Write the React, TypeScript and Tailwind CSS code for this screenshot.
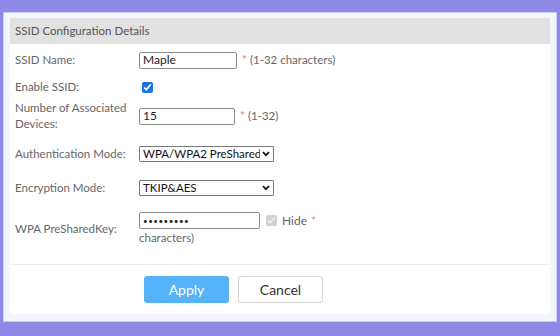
import React from 'react';

const font = { fontFamily: 'Lato, "Noto Sans", sans-serif' };

const Star = () => <span className="text-[#f07a7a] mr-[3px]">*</span>;

const Chevron = () => (
  <svg className="absolute right-[4px] top-[5px] pointer-events-none" width="8" height="6" viewBox="0 0 8 6">
    <path d="M1 1.2l3 3 3-3" fill="none" stroke="#111" strokeWidth="1.7" />
  </svg>
);

const Select: React.FC<{ value: string }> = ({ value }) => (
  <div className="relative w-[135px] h-[16px]">
    <select
      defaultValue={value}
      className="appearance-none block w-full h-[16px] border border-[#7a7a7a] rounded-[1px] bg-white pl-[3px] pr-[13px] py-0 text-[11.5px] leading-[14px] text-[#111]"
    >
      <option>{value}</option>
    </select>
    <Chevron />
  </div>
);

const TextInput: React.FC<{ value: string; width: string; type?: string; size?: string }> = ({
  value,
  width,
  type = 'text',
  size = 'text-[12px]',
}) => (
  <input
    type={type}
    defaultValue={value}
    className={`${width} ${size} h-[17px] border border-[#8a8a8a] rounded-[2px] bg-white px-[3px] text-[#222] outline-none`}
  />
);

const Label: React.FC<{ children: React.ReactNode }> = ({ children }) => (
  <div className="w-[129px] pl-[5px] pr-[6px] shrink-0 text-[11.5px] leading-[16px] text-[#666]">{children}</div>
);

export default function App() {
  return (
    <div className="w-[560px] h-[336px] bg-[#8e88e6] pt-[12px] px-[3px] overflow-hidden" style={font}>
      <div className="h-[310px] bg-[#f3f7fc] border border-[#cfcbf4] px-[6px] pt-[5px]">
        <div className="bg-white h-[296px] flex flex-col">
          <div className="h-[26px] bg-[#e1e1e1] flex items-center pl-[5px] text-[11.5px] text-[#555]">
            SSID Configuration Details
          </div>

          <div className="flex items-center h-[30px] pt-[2px]">
            <Label>SSID Name:</Label>
            <TextInput value="Maple" width="w-[98px]" />
            <span className="ml-[5px] text-[11.5px] text-[#666]"><Star />(1-32 characters)</span>
          </div>

          <div className="flex items-center h-[26px]">
            <Label>Enable SSID:</Label>
            <input type="checkbox" defaultChecked className="ml-[3px] w-[11px] h-[11px] accent-[#1a73e8]" />
          </div>

          <div className="flex items-center h-[32px]">
            <Label>Number of Associated Devices:</Label>
            <TextInput value="15" width="w-[96px]" />
            <span className="ml-[5px] text-[11.5px] text-[#666]"><Star />(1-32)</span>
          </div>

          <div className="flex items-center h-[44px]">
            <Label>Authentication Mode:</Label>
            <Select value="WPA/WPA2 PreSharedKey" />
          </div>

          <div className="flex items-center h-[24px]">
            <Label>Encryption Mode:</Label>
            <Select value="TKIP&AES" />
          </div>

          <div className="flex items-center pt-[12px] h-[46px]">
            <Label>WPA PreSharedKey:</Label>
            <div className="flex flex-col text-[11.5px] text-[#666]">
              <div className="flex items-center h-[17px]">
                <TextInput value="123456789" type="password" width="w-[121px]" size="text-[8px] tracking-[0.5px]" />
                <input type="checkbox" defaultChecked disabled className="ml-[6px] w-[11px] h-[11px]" />
                <span className="ml-[5px] text-[12px]">Hide</span>
                <span className="ml-[4px] text-[#f07a7a]">*</span>
              </div>
              <div className="leading-[16px] mt-[1px]">characters)</div>
            </div>
          </div>

          <div className="flex-1" />

          <div className="border-t border-[#ececec] h-[50px] flex items-start pt-[11px] pl-[134px] gap-[9px]">
            <button className="w-[85px] h-[27px] rounded-[3px] bg-[#56b3f9] text-white text-[14px]">Apply</button>
            <button className="w-[85px] h-[27px] rounded-[3px] bg-white border border-[#d4d4d4] text-[#333] text-[14px]">Cancel</button>
          </div>
        </div>
      </div>
    </div>
  );
}
